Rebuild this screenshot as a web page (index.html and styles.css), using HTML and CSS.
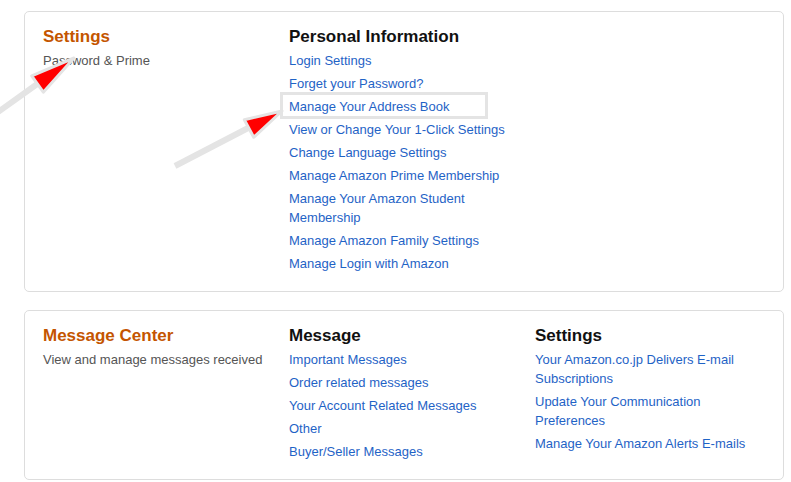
FILE: index.html
```html
<!DOCTYPE html>
<html lang="en">
<head>
  <meta charset="UTF-8" />
  <meta name="viewport" content="width=device-width, initial-scale=1.0" />
  <title>Your Account</title>
  <link rel="stylesheet" href="styles.css">
</head>
<body>

<div class="page">
  <div class="box">
    <div class="col">
      <h3 class="title">Settings</h3>
      <p class="desc">Password &amp; Prime</p>
    </div>
    <div class="col">
      <h3>Personal Information</h3>
      <ul class="links">
        <li><a href="#">Login Settings</a></li>
        <li><a href="#">Forget your Password?</a></li>
        <li><a href="#">Manage Your Address Book</a></li>
        <li><a href="#">View or Change Your 1-Click Settings</a></li>
        <li><a href="#">Change Language Settings</a></li>
        <li><a href="#">Manage Amazon Prime Membership</a></li>
        <li><a href="#">Manage Your Amazon Student Membership</a></li>
        <li><a href="#">Manage Amazon Family Settings</a></li>
        <li><a href="#">Manage Login with Amazon</a></li>
      </ul>
    </div>
    <div class="col"></div>
  </div>

  <div class="box">
    <div class="col">
      <h3 class="title">Message Center</h3>
      <p class="desc">View and manage messages received</p>
    </div>
    <div class="col">
      <h3>Message</h3>
      <ul class="links">
        <li><a href="#">Important Messages</a></li>
        <li><a href="#">Order related messages</a></li>
        <li><a href="#">Your Account Related Messages</a></li>
        <li><a href="#">Other</a></li>
        <li><a href="#">Buyer/Seller Messages</a></li>
      </ul>
    </div>
    <div class="col">
      <h3>Settings</h3>
      <ul class="links">
        <li><a href="#">Your Amazon.co.jp Delivers E-mail Subscriptions</a></li>
        <li><a href="#">Update Your Communication Preferences</a></li>
        <li><a href="#">Manage Your Amazon Alerts E-mails</a></li>
      </ul>
    </div>
  </div>
</div>

<!-- annotation layer -->
<svg class="marks" width="791" height="482" viewBox="0 0 791 482">
  <rect x="281.5" y="93.5" width="205" height="24" fill="none" stroke="#e4e4e4" stroke-width="3" />
  <line x1="-4" y1="113.5" x2="40" y2="82" stroke="#e4e4e4" stroke-width="6" />
  <polygon points="74,58 31.7,75.9 43.3,92.2" fill="#ff0000" stroke="#e4e4e4" stroke-width="3" stroke-linejoin="round" />
  <line x1="175" y1="166" x2="252" y2="126" stroke="#e4e4e4" stroke-width="6" />
  <polygon points="282,111 244.3,119.7 253.7,137.3" fill="#ff0000" stroke="#e4e4e4" stroke-width="3" stroke-linejoin="round" />
</svg>

</body>
</html>
```

FILE: styles.css
```css
body {
  margin: 0;
  padding: 0;
  background-color: #fff;
  font-family: "Liberation Sans", Arial, sans-serif;
  font-size: 13px;
  color: #111;
}
.page {
  padding: 11px 0 0 24px;
}
.box {
  display: grid;
  grid-template-columns: 246px 246px 246px;
  padding: 14px 0 14px 18px;
  box-sizing: border-box;
  width: 760px;
  border: 1px solid #dddddd;
  border-radius: 5px;
  margin-bottom: 18px;
}
.col {
  padding-right: 20px;
}
h3 {
  margin: 0 0 4px 0;
  font-size: 17px;
  line-height: 21px;
  font-weight: bold;
  color: #111;
}
h3.title {
  color: #c45500;
}
.desc {
  margin: 0;
  line-height: 19px;
  color: #555;
}
.links {
  list-style: none;
  margin: 0;
  padding: 0;
}
.links li {
  line-height: 19px;
  margin-bottom: 4px;
}
.links a {
  color: #1f63c6;
  text-decoration: none;
}
.marks {
  position: absolute;
  top: 0;
  left: 0;
  pointer-events: none;
}
```
